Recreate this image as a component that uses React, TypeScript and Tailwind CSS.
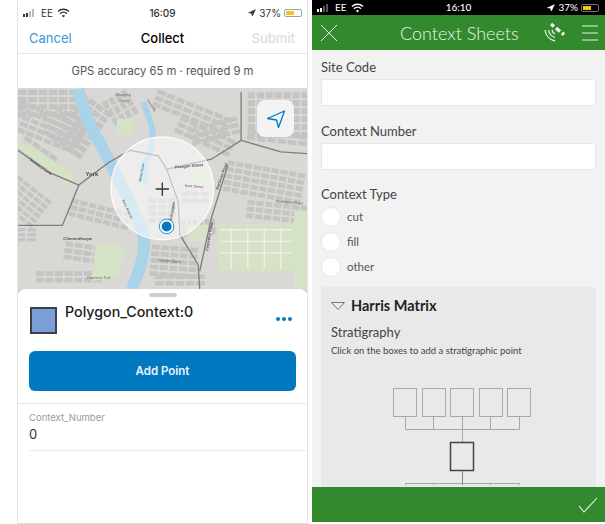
import { Navigation } from "lucide-react";

// street blocks on the map: x, y, columns, rows, rotation, block width, block height
const blockGroups = [
  [6, 12, 6, 4, 0, 26, 16], [10, 40, 8, 5, 22, 24, 14], [200, 20, 4, 8, 35, 24, 16],
  [330, 10, 3, 4, 60, 24, 16], [430, 10, 8, 3, 22, 26, 14], [500, 90, 6, 3, 25, 26, 14],
  [700, 20, 7, 6, 0, 22, 18], [700, 130, 7, 2, 6, 26, 14], [6, 270, 5, 6, 38, 22, 12],
  [6, 430, 7, 8, 90, 10, 26], [60, 430, 3, 8, 90, 10, 26], [170, 340, 7, 3, 14, 22, 14],
  [150, 470, 4, 3, 8, 24, 14], [640, 225, 9, 5, 10, 22, 14], [520, 130, 5, 3, -15, 26, 14],
  [410, 480, 5, 5, 4, 24, 14], [400, 340, 3, 4, 0, 24, 14], [600, 400, 2, 6, 85, 22, 12],
  [700, 345, 7, 3, 6, 22, 14], [30, 150, 4, 3, 35, 26, 14], [120, 60, 4, 5, 25, 24, 14],
  [500, 320, 3, 2, 0, 24, 14], [60, 560, 7, 2, 0, 24, 14], [420, 570, 5, 2, 0, 26, 14],
];

const labels = [
  { t: "Clementhorpe", x: 143, y: 465, s: 13, w: 700, r: 0, c: "#4a4a4a" },
  { t: "York", x: 210, y: 272, s: 18, w: 700, r: 0, c: "#4a4a4a" },
  { t: "Paragon Street", x: 480, y: 250, s: 12, w: 700, r: -5, c: "#555" },
  { t: "Kent Street", x: 510, y: 305, s: 11, w: 400, r: 5, c: "#555" },
  { t: "Nunnery Lane", x: 40, y: 225, s: 12, w: 700, r: 35, c: "#555" },
  { t: "Barbican Road", x: 610, y: 315, s: 12, w: 700, r: -70, c: "#555" },
  { t: "Cemetery Road", x: 580, y: 500, s: 12, w: 700, r: -80, c: "#555" },
  { t: "Terry Avenue", x: 320, y: 345, s: 11, w: 400, r: 65, c: "#555" },
  { t: "River Foss", x: 378, y: 290, s: 11, w: 700, r: -80, c: "#2d7fa8" },
  { t: "Rowntree Park", x: 215, y: 584, s: 11, w: 400, r: 0, c: "#4d8a3c" },
  { t: "Shopping", x: 300, y: 30, s: 11, w: 400, r: 0, c: "#666" },
  { t: "Centre", x: 310, y: 48, s: 11, w: 400, r: 0, c: "#666" },
  { t: "Heslington Road", x: 785, y: 352, s: 11, w: 400, r: 5, c: "#555" },
  { t: "Bishopgate", x: 470, y: 410, s: 11, w: 700, r: -80, c: "#555" },
  { t: "Grange Garth", x: 430, y: 530, s: 11, w: 400, r: 5, c: "#555" },
  { t: "Piccadilly", x: 395, y: 45, s: 10, w: 400, r: 55, c: "#555" },
];

function MapDrawing() {
  return (
    <svg viewBox="6 9 873 615" className="block h-full w-full blur-[0.6px]">
      <rect x="0" y="0" width="890" height="640" fill="#d9d8d5" />
      {blockGroups.map(([x, y, cols, rows, rot, w, h], g) => (
        <g key={g} transform={`rotate(${rot} ${x} ${y})`}>
          {Array.from({ length: cols * rows }).map((_, i) => (
            <rect
              key={i}
              x={x + (i % cols) * (w + 5)}
              y={y + Math.floor(i / cols) * (h + 6)}
              width={w}
              height={h}
              fill="#c4c4c2"
            />
          ))}
        </g>
      ))}
      <path d="M610 420h235v140H610zM520 420h60v50h-60zM240 470l90 20-20 90-80 10zM305 100h50v50h-50zM6 160l170 110-10 30L6 190z" fill="#d6e2c6" />
      <path d="M840 380h40v230h-40zM530 250h60v50h-60z" fill="#d6e2c6" />
      <path d="M620 435h215M620 470h215M620 505h215M650 430v125M700 430v125M750 430v125M800 430v125" stroke="#efefe9" strokeWidth="4" fill="none" />
      <path d="M188 10C200 70 225 130 262 190C300 260 345 350 378 430C400 480 380 540 350 615" stroke="#a9d3e8" strokeWidth="36" fill="none" />
      <path d="M385 50C405 100 425 150 405 200C390 235 380 260 395 300" stroke="#a9d3e8" strokeWidth="18" fill="none" />
      <g fill="none" stroke="#7d7d7d" strokeWidth="4">
        <path d="M680 20V165L800 200L880 205" />
        <path d="M680 165L590 222L500 242L455 252L430 212L345 195L280 232L190 300L140 422L6 422" />
        <path d="M6 195L100 262L190 300" />
        <path d="M455 252L490 350L495 450L550 540L555 615" />
        <path d="M640 240L590 400L555 560" />
      </g>
      <circle cx="442" cy="310" r="155" fill="#ffffff" fillOpacity="0.55" stroke="#ffffff" strokeWidth="4" strokeOpacity="0.85" />
      {labels.map((l) => (
        <text
          key={l.t}
          x={l.x}
          y={l.y}
          fontSize={l.s}
          fontWeight={l.w}
          fill={l.c}
          fontFamily="'Liberation Sans', sans-serif"
          transform={l.r ? `rotate(${l.r} ${l.x} ${l.y})` : undefined}
        >
          {l.t}
        </text>
      ))}
      <path d="M422 312h40M442 292v40" stroke="#333" strokeWidth="4" />
      <circle cx="455" cy="425" r="22" fill="#ffffff" stroke="#0079c1" strokeWidth="2.5" />
      <circle cx="455" cy="425" r="15" fill="#0079c1" />
    </svg>
  );
}

function StatusBar({ time, dark }: { time: string; dark?: boolean }) {
  const c = dark ? "#ffffff" : "#333333";
  return (
    <div className={`relative flex items-center justify-between text-[10px] ${dark ? "h-[15px] bg-black pl-[5px] pr-[6px] text-white" : "h-[25px] pl-[5px] pr-[5px] pt-[1px] text-[#333]"}`}>
      <div className="flex items-center gap-[4px]">
        <svg width="14" height="8" viewBox="0 0 14 8">
          <rect x="0" y="5" width="2" height="3" fill={c} />
          <rect x="3" y="4" width="2" height="4" fill={c} />
          <rect x="6" y="2" width="2" height="6" fill={c} opacity="0.35" />
          <rect x="9" y="0" width="2" height="8" fill={c} opacity="0.35" />
        </svg>
        <span>EE</span>
        <svg width="13" height="10" viewBox="0 0 13 10" fill="none" stroke={c}>
          <path d="M1 3.5a8 8 0 0 1 11 0" strokeWidth="1.4" />
          <path d="M3 5.7a5 5 0 0 1 7 0" strokeWidth="1.4" />
          <path d="M6.5 9.5L4.9 7.7a2.4 2.4 0 0 1 3.2 0z" fill={c} stroke="none" />
        </svg>
      </div>
      <span className="absolute left-1/2 -translate-x-1/2 font-medium">{time}</span>
      <div className="flex items-center gap-[3px]">
        <Navigation size={8} fill={c} stroke={c} />
        <span>37%</span>
        <div className={`flex h-[8px] w-[18px] items-center rounded-[2px] border p-[1px] ${dark ? "border-gray-500" : "border-gray-400"}`}>
          <div className="h-full w-[8px] bg-[#f5c518]" />
        </div>
      </div>
    </div>
  );
}

function CollectScreen() {
  return (
    <div className="flex w-[291px] flex-col border-x border-[#e4e4e4] font-['Inter',sans-serif]">
      <StatusBar time="16:09" />
      <div className="relative flex h-[29px] items-center justify-between border-b border-[#e5e5e5] pl-[11px] pr-[12px] text-[13px]">
        <span className="text-[#3b96d6]">Cancel</span>
        <span className="absolute left-1/2 -translate-x-1/2 font-medium text-black">Collect</span>
        <span className="font-medium text-[#dcdcdc]">Submit</span>
      </div>
      <div className="flex h-[34px] items-center justify-center text-[11.25px] text-[#555]">
        GPS accuracy 65 m · required 9 m
      </div>
      <div className="relative h-[205px] overflow-hidden">
        <MapDrawing />
        <div className="absolute right-[13px] top-[12px] flex h-[37px] w-[37px] items-center justify-center rounded-[8px] bg-[#f3f3f3]">
          <svg width="20" height="20" viewBox="0 0 20 20" fill="none" stroke="#0079c1" strokeWidth="1.3" strokeLinejoin="round">
            <path d="M1.5 9.5L18.5 2L12.5 18.5L10.5 11z" />
          </svg>
        </div>
      </div>
      <div className="relative z-10 -mt-[4px] flex flex-1 flex-col rounded-t-[8px] border-b border-[#ddd] bg-white">
        <div className="mx-auto mt-[4px] h-[4px] w-[28px] rounded-full bg-[#cfcfcf]" />
        <div className="flex items-start px-[12px] pt-[10px]">
          <div className="h-[27px] w-[27px] border-2 border-[#3c4048] bg-[#7a9fd8]" />
          <span className="ml-[8px] mt-[-5px] flex-1 text-[14.25px] font-medium leading-[20px] text-[#1a1a1a]">Polygon_Context:0</span>
          <div className="mr-[3px] mt-[10px] flex gap-[2px]">
            <span className="h-[4px] w-[4px] rounded-full bg-[#0079c1]" />
            <span className="h-[4px] w-[4px] rounded-full bg-[#0079c1]" />
            <span className="h-[4px] w-[4px] rounded-full bg-[#0079c1]" />
          </div>
        </div>
        <div className="mx-[11px] mt-[17px] flex h-[40px] items-center justify-center rounded-[6px] bg-[#0079c1] pt-[2px] text-[11.5px] font-semibold text-[#e8f2f9]">
          Add Point
        </div>
        <div className="mt-[12px] border-t border-[#e6e6e6] pl-[11px] pt-[7px]">
          <div className="text-[9.5px] leading-[13px] text-[#9a9a9a]">Context_Number</div>
          <div className="border-b border-[#ececec] pb-[7px] pt-[2px] text-[13px] leading-[17px] text-[#333]">0</div>
        </div>
      </div>
    </div>
  );
}

function FieldLabel({ children }: { children: string }) {
  return <div className="text-[13px] leading-[16px] text-[#444]">{children}</div>;
}

function TextField() {
  return <div className="mt-[4px] h-[27px] rounded-[3px] border border-[#e6e6e6] bg-white" />;
}

function Radio({ label }: { label: string }) {
  return (
    <div className="flex h-[25px] items-center gap-[6px]">
      <div className="h-[20px] w-[20px] rounded-full border border-[#e8e8e8] bg-white" />
      <span className="text-[11.5px] text-[#555]">{label}</span>
    </div>
  );
}

function HarrisDiagram() {
  const tops = [393, 422, 450, 479, 507];
  return (
    <svg width="150" height="100" viewBox="390 385 150 100" className="mx-auto mt-[28px] block shrink-0 translate-x-[1px]">
      <g fill="none" stroke="#a8a8a8" strokeWidth="1">
        {tops.map((x) => (
          <rect key={x} x={x + 0.5} y={388.5} width={23} height={28} />
        ))}
        <path d="M405.5 417V429.5H519.5V417M433.5 417V429.5M462.5 417V442M490.5 417V429.5" />
        <path d="M405.5 490V483.5H519.5V490M433.5 484V490M490.5 484V490" />
      </g>
      <rect x={450.5} y={442.5} width={23} height={28} fill="none" stroke="#444" strokeWidth="1.5" />
      <path d="M462.5 471V490" stroke="#888" />
    </svg>
  );
}

function ContextSheetsScreen() {
  return (
    <div className="flex h-[522px] w-[293px] flex-col bg-[#f2f2f2] font-['Lato',sans-serif]">
      <StatusBar time="16:10" dark />
      <div className="relative flex h-[35px] shrink-0 items-center justify-between bg-[#338a2e] pl-[8px] pr-[7px]">
        <svg width="18" height="18" viewBox="0 0 18 18" stroke="#e8f3e6" strokeWidth="1" fill="none">
          <path d="M1 1L17 17M17 1L1 17" />
        </svg>
        <span className="absolute left-[88px] text-[18px] font-light leading-none text-[#e8f3e6]">Context Sheets</span>
        <div className="flex items-center gap-[17px]">
          <svg width="22" height="22" viewBox="0 0 22 22" fill="none" stroke="#e8f3e6">
            <path d="M8 2L11 4.500M13 6L17 9.500M19 11L21 12.500" strokeWidth="3.500" />
            <path d="M9 8A6 6 0 0 0 12 12" strokeWidth="1.300" />
            <path d="M5.500 8A9.500 9.500 0 0 0 12 15.500" strokeWidth="1.300" />
            <path d="M2 8A13 13 0 0 0 12 19" strokeWidth="1.300" />
          </svg>
          <svg width="16" height="16" viewBox="0 0 16 16" stroke="#e8f3e6" strokeWidth="1">
            <path d="M0 1h16M0 8h16M0 15h16" />
          </svg>
        </div>
      </div>
      <div className="flex min-h-0 flex-1 flex-col overflow-hidden px-[9px] pt-[9px]">
        <FieldLabel>Site Code</FieldLabel>
        <TextField />
        <div className="mt-[17px]"><FieldLabel>Context Number</FieldLabel></div>
        <TextField />
        <div className="mt-[16px]"><FieldLabel>Context Type</FieldLabel></div>
        <div className="mt-[2px]">
          <Radio label="cut" />
          <Radio label="fill" />
          <Radio label="other" />
        </div>
        <div className="mt-[8px] flex min-h-0 flex-1 flex-col rounded-t-[3px] bg-[#e9e9e9] pl-[10px] pt-[10px]">
          <div className="flex items-center gap-[6px]">
            <svg width="14" height="8" viewBox="0 0 14 8" fill="none" stroke="#777">
              <path d="M0.500 0.500H13.500L7 7.500z" />
            </svg>
            <span className="text-[14.5px] font-bold leading-[18px] text-[#222]">Harris Matrix</span>
          </div>
          <div className="mt-[9px] text-[13px] leading-[16px] text-[#444]">Stratigraphy</div>
          <div className="mt-[5px] text-[9.5px] leading-[12px] text-[#444]">Click on the boxes to add a stratigraphic point</div>
          <HarrisDiagram />
        </div>
      </div>
      <div className="flex h-[35px] shrink-0 items-center justify-end bg-[#338a2e] pr-[7px]">
        <svg width="20" height="16" viewBox="0 0 20 16" fill="none" stroke="#e8f3e6" strokeWidth="1.100">
          <path d="M1 9l5 6L19 1" />
        </svg>
      </div>
    </div>
  );
}

export default function App() {
  return (
    <div className="flex h-[524px] w-[605px] gap-[4px] overflow-hidden bg-white pl-[17px]">
      <CollectScreen />
      <ContextSheetsScreen />
    </div>
  );
}
